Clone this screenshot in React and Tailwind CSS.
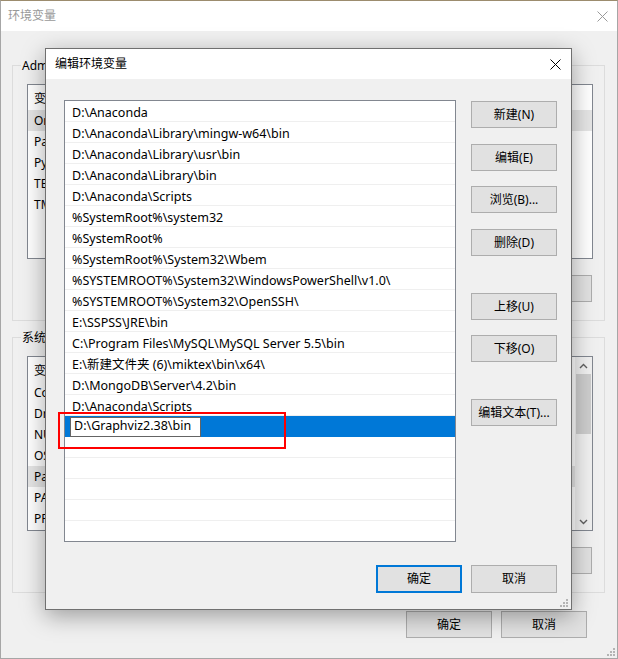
import React from 'react';

const FONT = "font-['Noto_Sans','Noto_Sans_CJK_SC',sans-serif]";

const paths = [
    'D:\\Anaconda',
    'D:\\Anaconda\\Library\\mingw-w64\\bin',
    'D:\\Anaconda\\Library\\usr\\bin',
    'D:\\Anaconda\\Library\\bin',
    'D:\\Anaconda\\Scripts',
    '%SystemRoot%\\system32',
    '%SystemRoot%',
    '%SystemRoot%\\System32\\Wbem',
    '%SYSTEMROOT%\\System32\\WindowsPowerShell\\v1.0\\',
    '%SYSTEMROOT%\\System32\\OpenSSH\\',
    'E:\\SSPSS\\JRE\\bin',
    'C:\\Program Files\\MySQL\\MySQL Server 5.5\\bin',
    'E:\\新建文件夹 (6)\\miktex\\bin\\x64\\',
    'D:\\MongoDB\\Server\\4.2\\bin',
    'D:\\Anaconda\\Scripts',
];

// only the first letters of these show from under the dialog
const userVars = ['OneDrive', 'Path', 'PyCharm', 'TEMP', 'TMP'];
const sysVars = ['ComSpec', 'DriverData', 'NUMBER_OF_PROCESSORS', 'OS', 'Path', 'PATHEXT', 'PROCESSOR_ARCHITECTURE'];

const CloseIcon = ({ color }) => (
    <svg width="11" height="11" viewBox="0 0 11 11">
        <path d="M0.5 0.5 L10.5 10.5 M10.5 0.5 L0.5 10.5" stroke={color} strokeWidth="1" fill="none" />
    </svg>
);

const Grip = ({ className }) => (
    <svg width="8" height="8" viewBox="0 0 8 8" className={className}>
        {[[6, 0], [3, 3], [6, 3], [0, 6], [3, 6], [6, 6]].map(([x, y], i) => (
            <rect key={i} x={x} y={y} width="2" height="2" fill="#b4b4b4" />
        ))}
    </svg>
);

const Button = ({ children, className = '' }) => (
    <div className={`flex items-center justify-center bg-[#e1e1e1] border border-[#adadad] text-[12px] text-black ${className}`}>
        {children}
    </div>
);

const VarList = ({ rows, selected, scroll }) => (
    <div className="flex w-[566px] h-[175px] border border-[#828790] bg-white overflow-hidden">
        <div className="flex-1 flex flex-col">
            <div className="h-[25px] flex items-center pt-[2px] pl-[6px] text-[12px] text-black">变量</div>
            {rows.map((n, i) => (
                <div key={n} className={`h-[21px] flex items-center pt-[1px] pl-[6px] text-[12px] text-black ${i === selected ? 'bg-[#e5e5e5]' : ''}`}>
                    {n}
                </div>
            ))}
        </div>
        {scroll && (
            <div className="w-[17px] bg-[#f0f0f0] flex flex-col items-center">
                <div className="h-[17px] flex items-center justify-center">
                    <svg width="9" height="6" viewBox="0 0 9 6"><path d="M1 5 L4.5 1.5 L8 5" stroke="#606060" strokeWidth="1.4" fill="none" /></svg>
                </div>
                <div className="w-[15px] h-[60px] bg-[#cdcdcd]" />
                <div className="flex-1" />
                <div className="h-[17px] flex items-center justify-center">
                    <svg width="9" height="6" viewBox="0 0 9 6"><path d="M1 1 L4.5 4.5 L8 1" stroke="#606060" strokeWidth="1.4" fill="none" /></svg>
                </div>
            </div>
        )}
    </div>
);

const Group = ({ label, rows, selected, scroll, className = '' }) => (
    <div className={`relative ml-[11px] w-[593px] border border-[#dcdcdc] pl-[14px] pt-[18px] pb-[18px] ${className}`}>
        <span className="absolute -top-[9px] left-[8px] bg-[#f0f0f0] px-[1px] text-[12px] text-black leading-[18px]">{label}</span>
        <VarList rows={rows} selected={selected} scroll={scroll} />
        <div className="mt-[16px] flex justify-end gap-[9px] pr-[12px]">
            <Button className="w-[86px] h-[27px]" />
            <Button className="w-[86px] h-[27px]" />
            <Button className="w-[86px] h-[27px]" />
        </div>
    </div>
);

const EditDialog = () => (
    <div className="absolute left-[45px] top-[48px] w-[527px] h-[562px] border border-[#707070] bg-[#f0f0f0] shadow-[0_6px_22px_rgba(0,0,0,0.35)] flex flex-col z-10">
        <div className="h-[30px] bg-white flex items-center justify-between pl-[9px] pr-[10px]">
            <span className="text-[12px] text-black">编辑环境变量</span>
            <CloseIcon color="#000" />
        </div>
        <div className="flex pt-[21px] pl-[18px]">
            <div className="w-[392px] h-[442px] border border-[#828790] bg-white overflow-hidden flex flex-col">
                {paths.map((p, i) => (
                    <div key={i} className="h-[21px] shrink-0 border-b border-[#efefef] flex items-center pt-[4px] pl-[7px] text-[12.5px] text-black whitespace-nowrap">
                        {p}
                    </div>
                ))}
                <div className="h-[21px] shrink-0 bg-[#0078d7] flex items-center pl-[5px]">
                    <div className="w-[131px] h-[20px] bg-white border border-[#646464] flex items-center pl-[3px] text-[12.5px] text-black">
                        D:\Graphviz2.38\bin
                    </div>
                </div>
                {[0, 1, 2, 3, 4].map((i) => (
                    <div key={i} className="h-[21px] shrink-0 border-b border-[#efefef]" />
                ))}
            </div>
            <div className="ml-[15px] w-[86px] flex flex-col">
                <Button className="mt-[1px] h-[27px]">新建(N)</Button>
                <Button className="mt-[16px] h-[27px]">编辑(E)</Button>
                <Button className="mt-[15px] h-[27px]">浏览(B)...</Button>
                <Button className="mt-[16px] h-[27px]">删除(D)</Button>
                <Button className="mt-[37px] h-[27px]">上移(U)</Button>
                <Button className="mt-[15px] h-[27px]">下移(O)</Button>
                <Button className="mt-[37px] h-[27px]">编辑文本(T)...</Button>
            </div>
        </div>
        <div className="mt-[23px] flex justify-end gap-[9px] pr-[14px]">
            <div className="w-[86px] h-[28px] flex items-center justify-center bg-[#e1e1e1] border-2 border-[#0078d7] text-[12px] text-black">确定</div>
            <Button className="w-[86px] h-[28px]">取消</Button>
        </div>
        <div className="absolute left-[12px] top-[363px] w-[228px] h-[37px] border-2 border-[#ff0000]" />
        <Grip className="absolute right-[3px] bottom-[2px]" />
    </div>
);

export default function App() {
    return (
        <div className={`relative w-[618px] h-[659px] overflow-hidden ${FONT}`}>
            <div className="w-full h-full border border-[#a6a6a6] border-t-[#9c8c6e] bg-[#f0f0f0] flex flex-col">
                <div className="h-[30px] shrink-0 bg-white flex items-center justify-between pl-[7px] pr-[9px]">
                    <span className="text-[12px] text-[#999999]">环境变量</span>
                    <CloseIcon color="#9a9a9a" />
                </div>
                <Group className="mt-[34px]" label="Administrator 的用户变量(U)" rows={userVars} selected={0} />
                <Group className="mt-[16px]" label="系统变量(S)" rows={sysVars} selected={4} scroll />
                <div className="mt-[18px] flex justify-end gap-[9px] pr-[30px]">
                    <Button className="w-[86px] h-[27px]">确定</Button>
                    <Button className="w-[86px] h-[27px]">取消</Button>
                </div>
            </div>
            <EditDialog />
            <Grip className="absolute right-[3px] bottom-[3px]" />
        </div>
    );
}
